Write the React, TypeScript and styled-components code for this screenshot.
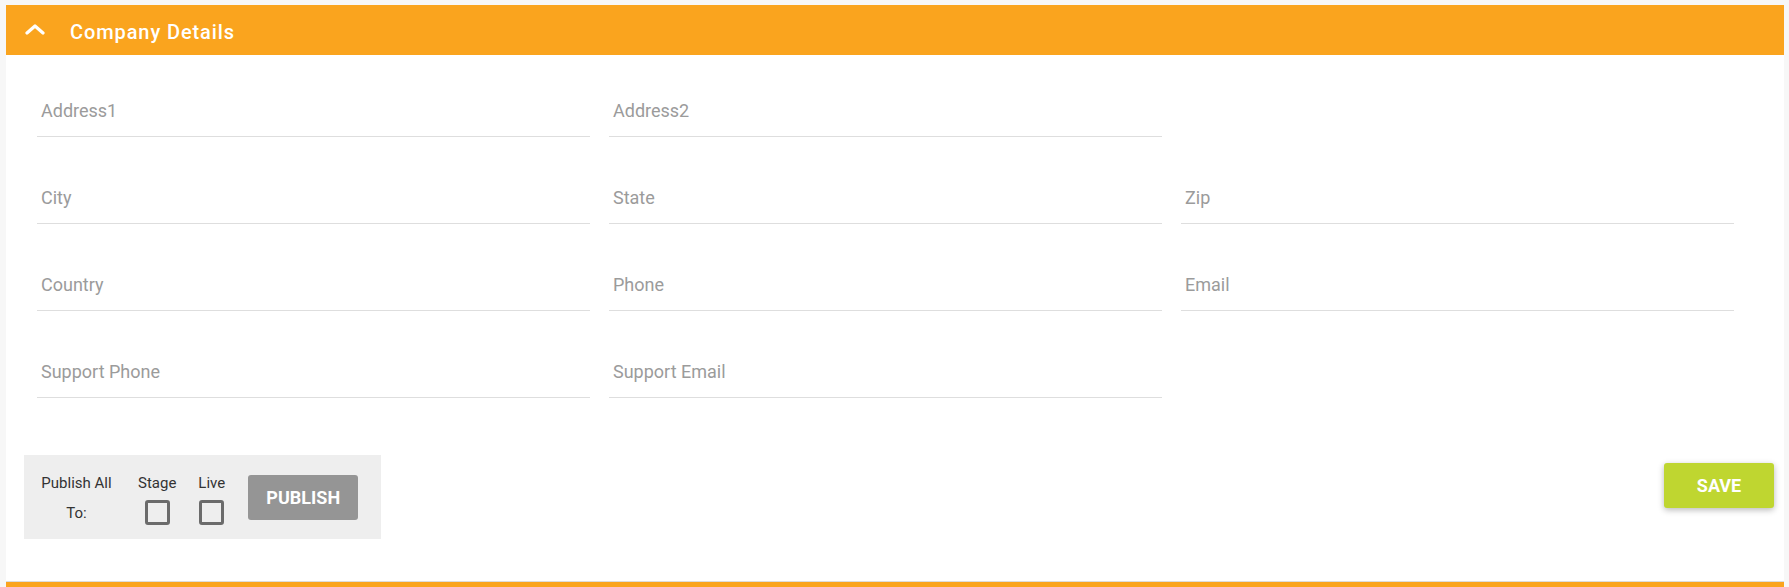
import styled, { createGlobalStyle } from "styled-components";

const GlobalStyle = createGlobalStyle`
  html, body {
    margin: 0;
    padding: 0;
    background: #f7f7f7;
    font-family: Roboto, "Liberation Sans", Arial, sans-serif;
  }
`;

const Page = styled.div`
  padding: 5px 5px 0 6px;
  height: 587px;
  box-sizing: border-box;
  overflow: hidden;
`;

const Card = styled.section`
  background: #fff;
  width: 1778px;
`;

const Header = styled.div`
  height: 50px;
  box-sizing: border-box;
  background: #faa41e;
  display: flex;
  align-items: center;
  padding: 3px 0 0 19px;
  color: #fff;
`;

const ChevronSlot = styled.span`
  display: flex;
  margin-top: -4px;
`;

const Title = styled.h2`
  margin: 0 0 0 25px;
  font-size: 20px;
  font-weight: 500;
  letter-spacing: 0.9px;
`;

const FormGrid = styled.div`
  display: grid;
  grid-template-columns: repeat(3, 553px);
  column-gap: 19px;
  row-gap: 39px;
  padding: 34px 0 0 31px;
`;

const Field = styled.label<{ $col?: number }>`
  grid-column: ${(p) => p.$col ?? "auto"};
  height: 48px;
  box-sizing: border-box;
  display: flex;
  align-items: flex-end;
  padding: 0 0 16px 4px;
  border-bottom: 1px solid #dedede;
  color: #9b9b9b;
  font-size: 18px;
  font-weight: 400;
  line-height: 18px;
`;

const Footer = styled.div`
  display: flex;
  justify-content: space-between;
  align-items: flex-start;
  padding: 57px 10px 42px 18px;
`;

const PublishBox = styled.div`
  background: #eeeeee;
  display: flex;
  align-items: flex-start;
  padding: 13px 23px 11px 17px;
  color: #333;
  font-size: 15px;
  line-height: 30px;
`;

const PublishLabel = styled.div`
  text-align: center;
  width: 71px;
  margin-right: 26px;
`;

const Target = styled.div<{ $gap: number }>`
  display: flex;
  flex-direction: column;
  align-items: center;
  margin-right: ${(p) => p.$gap}px;
`;

const Box = styled.span`
  width: 25px;
  height: 25px;
  box-sizing: border-box;
  border: 3px solid #6b6b6b;
  border-radius: 3px;
  margin-top: 2px;
`;

const Button = styled.button<{ $bg: string; $shadow?: boolean }>`
  width: 110px;
  height: 45px;
  border: none;
  border-radius: 3px;
  background: ${(p) => p.$bg};
  color: #fff;
  font-family: inherit;
  font-size: 18px;
  font-weight: 700;
  box-shadow: ${(p) => (p.$shadow ? "0 2px 6px rgba(0,0,0,0.28)" : "none")};
  cursor: pointer;
`;

const PublishButton = styled(Button)`
  margin-top: 7px;
`;

const SaveButton = styled(Button)`
  margin-top: 8px;
`;

const NextHeader = styled.div`
  height: 50px;
  background: #faa41e;
  border-top: 1px solid #dcdcdc;
  width: 1778px;
`;

const Chevron = () => (
  <svg width="20" height="11" viewBox="0 0 20 11">
    <polyline
      points="2,9 10,2 18,9"
      fill="none"
      stroke="#fff"
      strokeWidth="3.2"
      strokeLinecap="round"
      strokeLinejoin="round"
    />
  </svg>
);

const fields: { label: string; col?: number }[] = [
  { label: "Address1" },
  { label: "Address2" },
  { label: "City", col: 1 },
  { label: "State" },
  { label: "Zip" },
  { label: "Country" },
  { label: "Phone" },
  { label: "Email" },
  { label: "Support Phone" },
  { label: "Support Email" },
];

export default function App() {
  return (
    <Page>
      <GlobalStyle />
      <Card>
        <Header>
          <ChevronSlot>
            <Chevron />
          </ChevronSlot>
          <Title>Company Details</Title>
        </Header>
        <FormGrid>
          {fields.map((f) => (
            <Field key={f.label} $col={f.col}>
              {f.label}
            </Field>
          ))}
        </FormGrid>
        <Footer>
          <PublishBox>
            <PublishLabel>
              Publish All
              <br />
              To:
            </PublishLabel>
            <Target $gap={22}>
              Stage
              <Box />
            </Target>
            <Target $gap={23}>
              Live
              <Box />
            </Target>
            <PublishButton $bg="#959595">PUBLISH</PublishButton>
          </PublishBox>
          <SaveButton $bg="#bfd630" $shadow>
            SAVE
          </SaveButton>
        </Footer>
      </Card>
      <NextHeader />
    </Page>
  );
}
